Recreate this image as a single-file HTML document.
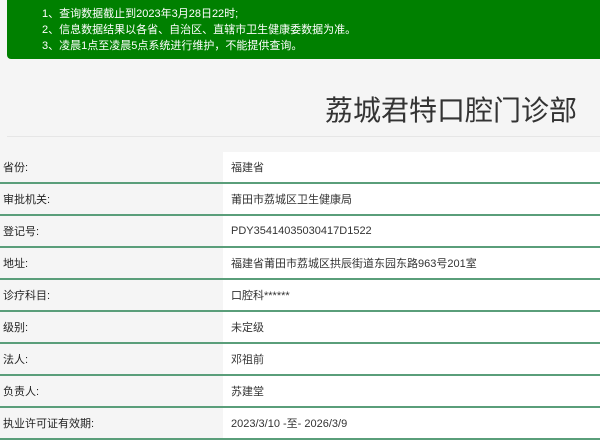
<!DOCTYPE html>
<html><head><meta charset="utf-8"><style>
body{margin:0;width:600px;height:439px;overflow:hidden;background:#f5f5f5;font-family:"Liberation Sans","Noto Sans CJK SC",sans-serif;}
.notice{position:absolute;left:7px;top:0;width:593px;height:59px;background:#008000;border-radius:0 0 0 4px;color:#fff;font-size:11px;}
.notice div{position:absolute;left:35px;}
h1{position:absolute;right:23px;top:89px;margin:0;font-weight:normal;font-size:28px;color:#333;}
.sep{position:absolute;left:7px;right:0;top:136px;border-top:1px solid #e6e6e6;}
table{position:absolute;left:0;top:152px;width:600px;border-collapse:collapse;font-size:11px;color:#333;}
td{height:30px;padding:0;border-bottom:2px solid #5a9e7a;}
td.l{width:220px;padding-left:3px;background:#f5f5f5;color:#222;}
td.v{background:#fff;padding-left:8px;}
</style></head><body>
<div class="notice">
<div style="top:5px">1、查询数据截止到2023年3月28日22时;</div>
<div style="top:21px">2、信息数据结果以各省、自治区、直辖市卫生健康委数据为准。</div>
<div style="top:37px">3、凌晨1点至凌晨5点系统进行维护，不能提供查询。</div>
</div>
<h1>荔城君特口腔门诊部</h1>
<div class="sep"></div>
<table>
<tr><td class="l">省份:</td><td class="v">福建省</td></tr>
<tr><td class="l">审批机关:</td><td class="v">莆田市荔城区卫生健康局</td></tr>
<tr><td class="l">登记号:</td><td class="v">PDY35414035030417D1522</td></tr>
<tr><td class="l">地址:</td><td class="v">福建省莆田市荔城区拱辰街道东园东路963号201室</td></tr>
<tr><td class="l">诊疗科目:</td><td class="v">口腔科******</td></tr>
<tr><td class="l">级别:</td><td class="v">未定级</td></tr>
<tr><td class="l">法人:</td><td class="v">邓祖前</td></tr>
<tr><td class="l">负责人:</td><td class="v">苏建堂</td></tr>
<tr><td class="l">执业许可证有效期:</td><td class="v">2023/3/10 -至- 2026/3/9</td></tr>
</table>
</body></html>
